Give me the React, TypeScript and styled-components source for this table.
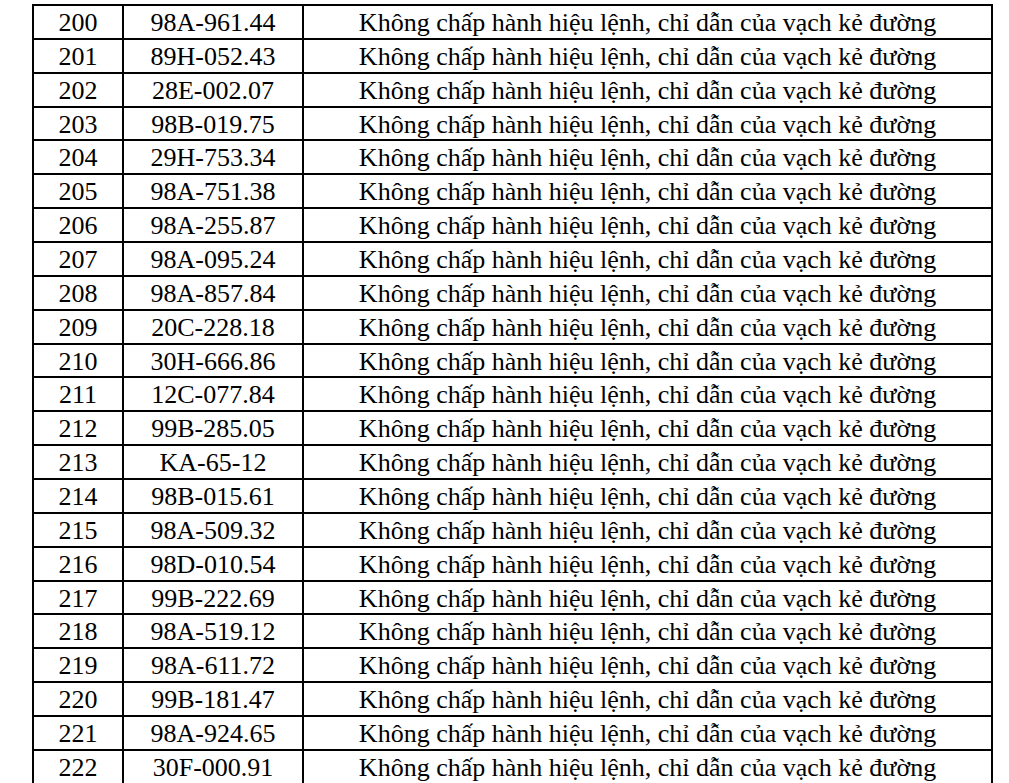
import React from "react";
import styled, { createGlobalStyle } from "styled-components";

const GlobalStyle = createGlobalStyle`
  html, body {
    margin: 0;
    padding: 0;
    background: #fff;
    overflow: hidden;
  }
`;

const VIOLATION = "Không chấp hành hiệu lệnh, chỉ dẫn của vạch kẻ đường";

const rows: [number, string][] = [
  [200, "98A-961.44"],
  [201, "89H-052.43"],
  [202, "28E-002.07"],
  [203, "98B-019.75"],
  [204, "29H-753.34"],
  [205, "98A-751.38"],
  [206, "98A-255.87"],
  [207, "98A-095.24"],
  [208, "98A-857.84"],
  [209, "20C-228.18"],
  [210, "30H-666.86"],
  [211, "12C-077.84"],
  [212, "99B-285.05"],
  [213, "KA-65-12"],
  [214, "98B-015.61"],
  [215, "98A-509.32"],
  [216, "98D-010.54"],
  [217, "99B-222.69"],
  [218, "98A-519.12"],
  [219, "98A-611.72"],
  [220, "99B-181.47"],
  [221, "98A-924.65"],
  [222, "30F-000.91"],
];

const Page = styled.div`
  padding: 4px 0 0 32px;
`;

const Table = styled.table`
  border-collapse: collapse;
  width: 953px;
  table-layout: fixed;
  font-family: "Liberation Serif", "Times New Roman", serif;
  font-size: 26px;
  color: #000;
`;

const Row = styled.tr`
  height: 33.86px;
`;

const Cell = styled.td<{ $width: number }>`
  width: ${(p) => p.$width}px;
  border: 2px solid #000;
  padding: 2px 0 0;
  text-align: center;
  vertical-align: middle;
  line-height: 1;
  white-space: nowrap;
`;

export default function App() {
  return (
    <Page>
      <GlobalStyle />
      <Table>
        <tbody>
          {rows.map(([no, plate]) => (
            <Row key={no}>
              <Cell $width={88}>{no}</Cell>
              <Cell $width={178}>{plate}</Cell>
              <Cell $width={687}>{VIOLATION}</Cell>
            </Row>
          ))}
        </tbody>
      </Table>
    </Page>
  );
}
